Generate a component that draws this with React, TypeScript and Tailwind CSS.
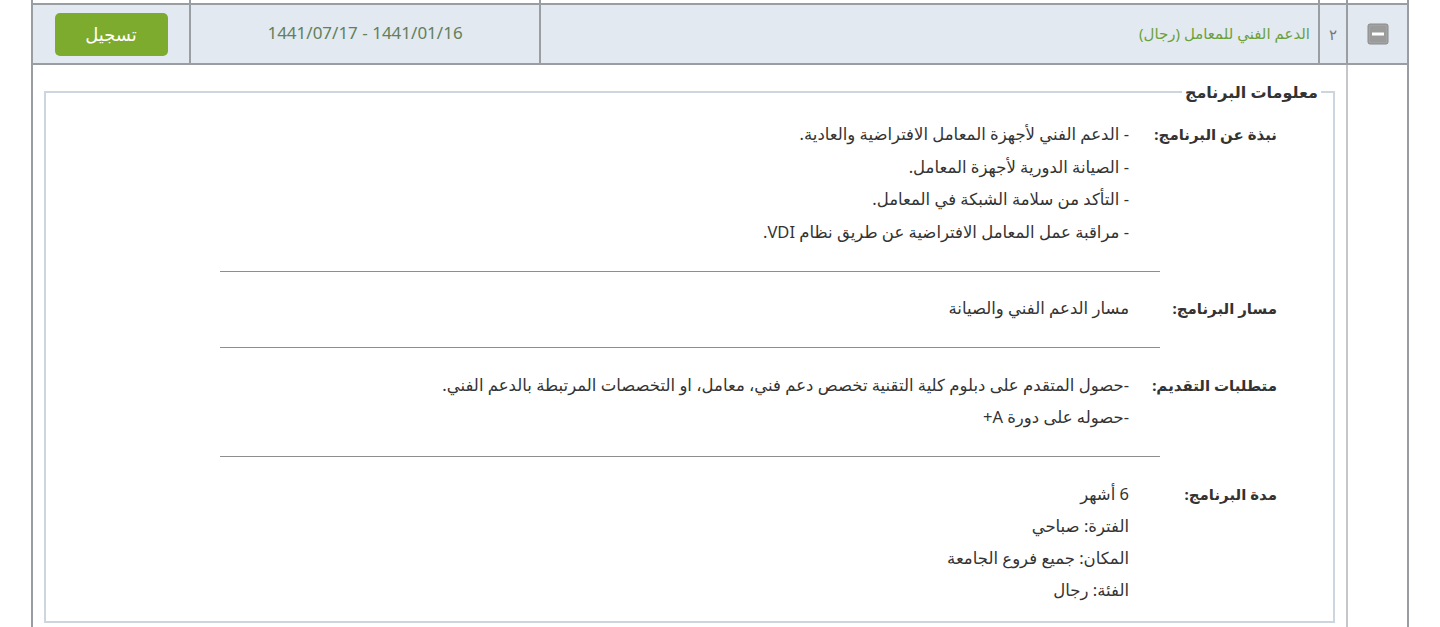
import React from 'react'

const font = { fontFamily: '"Noto Sans", "DejaVu Sans", sans-serif' }

type Section = { label: string; lines: string[] }

const sections: Section[] = [
  {
    label: 'نبذة عن البرنامج:',
    lines: [
      '- الدعم الفني لأجهزة المعامل الافتراضية والعادية.',
      '- الصيانة الدورية لأجهزة المعامل.',
      '- التأكد من سلامة الشبكة في المعامل.',
      '- مراقبة عمل المعامل الافتراضية عن طريق نظام VDI.',
    ],
  },
  { label: 'مسار البرنامج:', lines: ['مسار الدعم الفني والصيانة'] },
  {
    label: 'متطلبات التقديم:',
    lines: [
      '-حصول المتقدم على دبلوم كلية التقنية تخصص دعم فني، معامل، او التخصصات المرتبطة بالدعم الفني.',
      '-حصوله على دورة A+',
    ],
  },
  {
    label: 'مدة البرنامج:',
    lines: ['6 أشهر', 'الفترة: صباحي', 'المكان: جميع فروع الجامعة', 'الفئة: رجال'],
  },
]

function CollapseIcon() {
  return (
    <svg width="22" height="22" viewBox="0 0 22 22">
      <rect x="1" y="1" width="20" height="20" rx="2" fill="#a3a3a3" stroke="#8a8a8a" />
      <rect x="3" y="3" width="16" height="16" rx="1" fill="#9b9b9b" />
      <rect x="5" y="9.5" width="12" height="3" fill="#ffffff" />
    </svg>
  )
}

export default function App() {
  return (
    <div className="min-h-[627px] bg-white" style={font}>
      <div dir="rtl" className="ml-[31px] w-[1378px] border-x-2 border-[#9a9ea3]">
        <div className="grid h-[3px] grid-cols-[61px_28px_779px_350px_1fr]">
          <div className="border-l-2 border-[#9a9ea3]" />
          <div className="border-l-2 border-[#9a9ea3]" />
          <div className="border-l-2 border-[#9a9ea3]" />
          <div className="border-l-2 border-[#9a9ea3]" />
          <div />
        </div>
        <div className="grid h-[62px] grid-cols-[61px_28px_779px_350px_1fr] border-y-2 border-[#9a9ea3] bg-[#e3e9f1]">
          <div className="flex items-center justify-center border-l-2 border-[#9a9ea3]">
            <CollapseIcon />
          </div>
          <div className="flex items-center justify-center border-l-2 border-[#9a9ea3] text-[15px] text-[#777]">٢</div>
          <div className="flex items-center border-l-2 border-[#9a9ea3] pr-2 pb-[2px] text-[15px] text-[#6aa13a]">
            الدعم الفني للمعامل (رجال)
          </div>
          <div className="flex items-center justify-center border-l-2 border-[#9a9ea3] pb-[2px] text-[17px] text-[#62805a]">
            <span dir="ltr">1441/07/17 - 1441/01/16</span>
          </div>
          <div className="flex items-center justify-center">
            <button className="h-[43px] w-[113px] rounded-[5px] bg-[#7dab2d] text-[18px] text-white">تسجيل</button>
          </div>
        </div>
        <div className="grid grid-cols-[61px_1fr]">
          <div className="border-l-2 border-[#c4c6c9]" />
          <div className="px-[11px] pt-[15px] pb-[4px]">
            <fieldset className="border-2 border-[#cdd5de] px-[12px] pb-[15px]">
              <legend className="px-[3px] text-[16px] font-bold text-[#333]">معلومات البرنامج</legend>
              <div className="pt-[14px]">
                {sections.map((s, i) => (
                  <div key={i}>
                    {i > 0 && <div className="mx-auto mt-[22.5px] mb-[20.5px] h-px w-[940px] bg-[#8e8e8e]" />}
                    <div className="flex pr-[44px]">
                      <div className="w-[148px] shrink-0 text-[15px] font-bold leading-[32.5px] text-[#333]">{s.label}</div>
                      <div className="text-[16.5px] leading-[32.5px] text-[#333]">
                        {s.lines.map((l, j) => (
                          <div key={j} className={j > 0 && i === 3 ? 'leading-[32px]' : ''}>{l}</div>
                        ))}
                      </div>
                    </div>
                  </div>
                ))}
              </div>
            </fieldset>
          </div>
        </div>
      </div>
    </div>
  )
}
